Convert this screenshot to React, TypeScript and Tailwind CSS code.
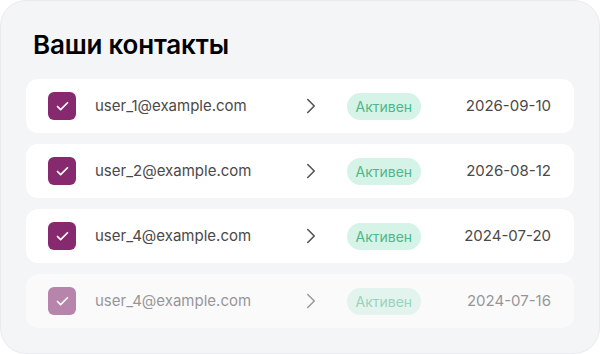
import { Check, ChevronRight } from "lucide-react";

const contacts = [
  { email: "user_1@example.com", date: "2026-09-10", faded: false },
  { email: "user_2@example.com", date: "2026-08-12", faded: false },
  { email: "user_4@example.com", date: "2024-07-20", faded: false },
  { email: "user_4@example.com", date: "2024-07-16", faded: true },
];

export default function App() {
  return (
    <div className="w-[600px] h-[354px] bg-white font-['Inter',sans-serif]">
      <div className="h-full rounded-[26px] border border-[#e9eaee] bg-[#f4f5f7] px-[25px] pt-[27px]">
        {/* Header */}
        <h1 className="pl-[7px] text-[26px] leading-[34px] font-semibold tracking-[-0.2px] text-black">
          Ваши контакты
        </h1>

        {/* Rows */}
        <div className="mt-[17px] flex flex-col gap-[11px]">
          {contacts.map((c, i) => (
            <div
              key={i}
              className={`h-[54px] rounded-[12px] bg-white flex items-center pl-[22px] pr-[23px] ${
                c.faded ? "opacity-55" : ""
              }`}
            >
              <div className="w-[28px] h-[28px] rounded-[6px] bg-[#86296f] flex items-center justify-center">
                <Check size={15} strokeWidth={2.8} className="text-white" />
              </div>
              <span className="ml-[19px] w-[203px] text-[15px] text-[#4b4848]">{c.email}</span>
              <ChevronRight size={26} strokeWidth={1.5} className="text-[#555]" />
              <span className="ml-[23px] h-[27px] px-[8.5px] rounded-full bg-[#d6f3e7] text-[#4cb88b] text-[14px] flex items-center">
                Активен
              </span>
              <span className="ml-auto text-[15px] text-[#4b4848]">{c.date}</span>
            </div>
          ))}
        </div>
      </div>
    </div>
  );
}
